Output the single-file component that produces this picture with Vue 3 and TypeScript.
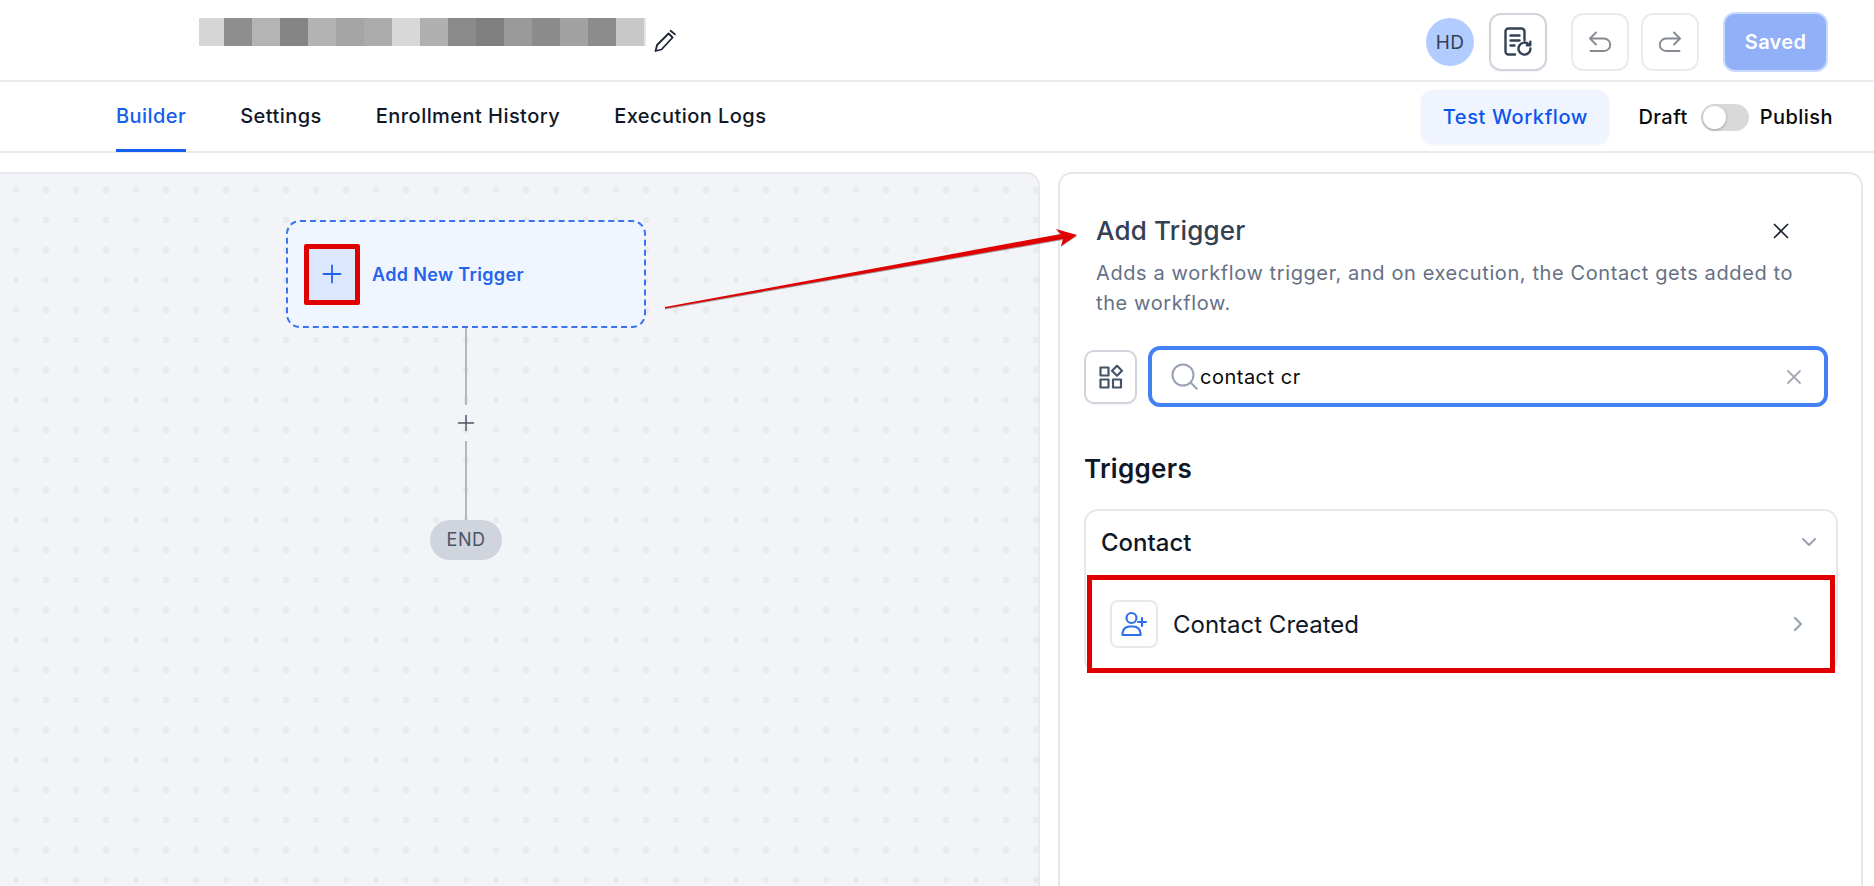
<script setup lang="ts">
const blurBlocks: string[] = [
  '#d6d6d6', '#8e8e8e', '#b4b4b4', '#858585', '#b3b3b3', '#a5a5a5', '#ababab', '#d8d8d8',
  '#b0b0b0', '#8a8a8a', '#808080', '#9a9a9a', '#8b8b8b', '#a2a2a2', '#8c8c8c', '#c8c8c8'
]

const tabs = ['Builder', 'Settings', 'Enrollment History', 'Execution Logs']
</script>

<template>
  <div class="page">
    <header class="topbar">
      <div class="name-row">
        <div class="blur-name">
          <span v-for="(color, i) in blurBlocks" :key="i" class="blur-block" :style="{ background: color }"></span>
        </div>
        <svg class="pencil" width="24" height="24" viewBox="0 0 24 24" fill="none" stroke="#1d2433" stroke-width="1.800" stroke-linejoin="round" stroke-linecap="round">
          <path d="M2.500 22l1.600-6L15.600 4.500l4 4L8.500 20.500z" />
          <path d="M17.600 1.800l4.400 3.600" />
        </svg>
      </div>
      <div class="actions">
        <div class="avatar">HD</div>
        <button class="icon-btn dark">
          <svg width="30" height="30" viewBox="0 0 30 30" fill="none" stroke="#344054" stroke-width="2.400" stroke-linecap="round" stroke-linejoin="round">
            <path d="M12 27.500H5.500a3 3 0 0 1-3-3V4.500a3 3 0 0 1 3-3h13a3 3 0 0 1 3 3V13" />
            <path d="M7.500 8.500h9M7.500 13.500h9M7.500 18.500h4" />
            <path d="M27.500 21.500a6 6 0 1 1-1.800-4.200" />
            <path d="M27.300 14.800v3.400h-3.400" />
          </svg>
        </button>
        <button class="icon-btn undo">
          <svg width="26" height="26" viewBox="0 0 26 26" fill="none" stroke="#858a93" stroke-width="1.900" stroke-linecap="round" stroke-linejoin="round">
            <path d="M9 3.500L3 9.500l6 6" />
            <path d="M3.500 9.500H17a6 6 0 0 1 0 12.500H3.500" />
          </svg>
        </button>
        <button class="icon-btn">
          <svg width="26" height="26" viewBox="0 0 26 26" fill="none" stroke="#858a93" stroke-width="1.900" stroke-linecap="round" stroke-linejoin="round">
            <path d="M17 3.500l6 6-6 6" />
            <path d="M22.500 9.500H9a6 6 0 0 0 0 12.500h13.500" />
          </svg>
        </button>
        <button class="saved">Saved</button>
      </div>
    </header>

    <nav class="tabbar">
      <div class="tabs">
        <div v-for="(tab, i) in tabs" :key="tab" class="tab" :class="{ active: i === 0 }">{{ tab }}</div>
      </div>
      <div class="tab-actions">
        <button class="test-btn">Test Workflow</button>
        <span class="toggle-label draft">Draft</span>
        <span class="toggle"><span class="knob"></span></span>
        <span class="toggle-label">Publish</span>
      </div>
    </nav>

    <main class="workspace">
      <section class="canvas">
        <div class="flow">
          <div class="trigger-node">
            <div class="plus-box">
              <svg width="20" height="20" viewBox="0 0 20 20" fill="none" stroke="#2563eb" stroke-width="1.800" stroke-linecap="round">
                <path d="M10 1.500v17M1.500 10h17" />
              </svg>
            </div>
            <span class="trigger-text">Add New Trigger</span>
          </div>
          <div class="line first"></div>
          <svg class="add-step" width="18" height="18" viewBox="0 0 18 18" fill="none" stroke="#4b5563" stroke-width="1.500" stroke-linecap="round">
            <path d="M9 1.500v15M1.500 9h15" />
          </svg>
          <div class="line second"></div>
          <div class="end-pill">END</div>
        </div>
      </section>

      <aside class="panel">
        <div class="panel-head">
          <h2 class="panel-title">Add Trigger</h2>
          <svg class="close" width="16" height="16" viewBox="0 0 16 16" fill="none" stroke="#1d2433" stroke-width="1.700" stroke-linecap="round">
            <path d="M1.500 1.500l13 13M14.500 1.500l-13 13" />
          </svg>
        </div>
        <p class="panel-desc">Adds a workflow trigger, and on execution, the Contact gets added to the workflow.</p>

        <div class="search-row">
          <button class="filter-btn">
            <svg width="26" height="26" viewBox="0 0 26 26" fill="none" stroke="#475467" stroke-width="2.200" stroke-linejoin="round">
              <rect x="2.500" y="3.500" width="8" height="8" />
              <rect x="2.500" y="15.500" width="8" height="8" />
              <rect x="15" y="15.500" width="8" height="8" />
              <path d="M19 1.800l5 5-5 5-5-5z" />
            </svg>
          </button>
          <div class="search-box">
            <svg width="27" height="27" viewBox="0 0 27 27" fill="none" stroke="#98a2b3" stroke-width="2" stroke-linecap="round">
              <circle cx="12" cy="12" r="10.500" />
              <path d="M19.800 19.800l6 6" />
            </svg>
            <span class="search-text">contact cr</span>
            <svg class="clear" width="16" height="16" viewBox="0 0 16 16" fill="none" stroke="#a3a9b5" stroke-width="1.800" stroke-linecap="round">
              <path d="M2 2l12 12M14 2L2 14" />
            </svg>
          </div>
        </div>

        <h3 class="section-title">Triggers</h3>

        <div class="accordion">
          <div class="accordion-head">
            <span class="accordion-title">Contact</span>
            <svg width="16" height="10" viewBox="0 0 16 10" fill="none" stroke="#98a2b3" stroke-width="2" stroke-linecap="round" stroke-linejoin="round">
              <path d="M2 2l6 6 6-6" />
            </svg>
          </div>
          <div class="trigger-item">
            <div class="item-icon">
              <svg width="28" height="28" viewBox="0 0 28 28" fill="none" stroke="#2f6fed" stroke-width="2.200" stroke-linecap="round" stroke-linejoin="round">
                <circle cx="11.500" cy="8" r="5" />
                <path d="M2.500 25v-1.500a7 7 0 0 1 7-7h4a7 7 0 0 1 7 7V25z" />
                <path d="M22 8v8M18 12h8" />
              </svg>
            </div>
            <span class="item-text">Contact Created</span>
            <svg class="item-chevron" width="10" height="16" viewBox="0 0 10 16" fill="none" stroke="#98a2b3" stroke-width="2.200" stroke-linecap="round" stroke-linejoin="round">
              <path d="M2 2l6 6-6 6" />
            </svg>
          </div>
        </div>
      </aside>
    </main>

    <!-- annotation arrow lies over the canvas and the panel -->
    <svg class="arrow" width="1874" height="886" viewBox="0 0 1874 886">
      <polygon points="665,307 1061,234 1056,229 1077,235 1061,246 1063,239 665,308.500" fill="#e00000" />
    </svg>
  </div>
</template>

<style>
html,
body {
  margin: 0;
  background: #ffffff;
}
</style>

<style scoped>
.page {
  position: relative;
  width: 1874px;
  height: 886px;
  overflow: hidden;
  background: #fff;
  font-family: Inter, "Liberation Sans", sans-serif;
  color: #101828;
}

button {
  font-family: inherit;
  padding: 0;
  background: #fff;
}

.topbar {
  height: 82px;
  box-sizing: border-box;
  display: flex;
  justify-content: space-between;
  padding: 18px 46px 0 199px;
  border-bottom: 2px solid #eaebf0;
}

.name-row {
  display: flex;
  align-items: flex-start;
}

.blur-name {
  display: flex;
  width: 447px;
  height: 28px;
  background: #e6e6e6;
}

.blur-block {
  width: 28px;
  height: 28px;
}

.blur-block:first-child {
  width: 25px;
}

.pencil {
  margin: 11px 0 0 7px;
}

.actions {
  display: flex;
  align-items: center;
  height: 48px;
}

.avatar {
  width: 48px;
  height: 48px;
  border-radius: 50%;
  background: #b2ccff;
  color: #344054;
  font-size: 19px;
  letter-spacing: 0.4px;
  display: grid;
  place-items: center;
}

.icon-btn {
  width: 58px;
  height: 58px;
  box-sizing: border-box;
  border: 2px solid #e9ebf0;
  border-radius: 12px;
  display: grid;
  place-items: center;
  margin-left: 12px;
}

.icon-btn.dark {
  border-color: #d0d5dd;
  margin-left: 15px;
  box-shadow: 0 1px 2px rgba(16, 24, 40, 0.05);
}

.icon-btn.undo {
  margin-left: 24px;
}

.saved {
  width: 105px;
  height: 60px;
  box-sizing: border-box;
  margin-left: 24px;
  border: 2px solid #c9dafc;
  border-radius: 12px;
  background: #91b0f8;
  color: #fff;
  font-size: 20px;
  font-weight: 600;
  letter-spacing: 0.3px;
}

.tabbar {
  height: 71px;
  box-sizing: border-box;
  display: flex;
  justify-content: space-between;
  padding: 0 41px 0 116px;
  border-bottom: 2px solid #eaebf0;
}

.tabs {
  display: flex;
  gap: 54px;
}

.tab {
  height: 70px;
  box-sizing: border-box;
  line-height: 68px;
  font-size: 20px;
  font-weight: 500;
  letter-spacing: 0.45px;
  color: #101828;
}

.tab.active {
  color: #155eef;
  border-bottom: 3px solid #155eef;
}

.tab-actions {
  display: flex;
  align-items: center;
  height: 70px;
}

.test-btn {
  width: 188px;
  height: 54px;
  border: none;
  border-radius: 12px;
  background: #eff4ff;
  color: #0b57ee;
  font-size: 20px;
  font-weight: 500;
  letter-spacing: 0.6px;
  box-shadow: 0 1px 3px rgba(16, 24, 40, 0.06);
}

.toggle-label {
  font-size: 20px;
  font-weight: 500;
  letter-spacing: 0.45px;
  color: #0a0a0a;
}

.toggle-label.draft {
  margin-left: 29px;
}

.toggle {
  width: 48px;
  height: 27px;
  margin: 0 11px 0 13px;
  border-radius: 14px;
  background: #d9d9d9;
  display: block;
  padding: 2px;
  box-sizing: border-box;
}

.knob {
  display: block;
  width: 23px;
  height: 23px;
  border-radius: 50%;
  background: #fff;
  box-shadow: 0 1px 3px rgba(16, 24, 40, 0.3);
}

.workspace {
  display: flex;
  gap: 18px;
  padding-top: 19px;
}

.canvas {
  width: 1040px;
  height: 760px;
  flex: none;
  box-sizing: border-box;
  border: 2px solid #e7e8ee;
  border-left: none;
  border-radius: 0 14px 0 0;
  background-color: #f3f4f8;
  background-image: radial-gradient(circle at center, #e9eaec 0, #e9eaec 3px, transparent 3.5px);
  background-size: 30px 30px;
  background-position: 1px 1px;
}

.flow {
  width: 360px;
  margin: 46px 0 0 286px;
  display: flex;
  flex-direction: column;
  align-items: center;
}

.trigger-node {
  width: 100%;
  height: 108px;
  box-sizing: border-box;
  border: 2px dashed #3b72f0;
  border-radius: 14px;
  background: #eff6ff;
  display: flex;
  align-items: center;
  gap: 12px;
  padding-left: 16px;
}

.plus-box {
  width: 56px;
  height: 61px;
  box-sizing: border-box;
  border: 5px solid #e00000;
  border-radius: 2px;
  background: #dbe8fe;
  display: grid;
  place-items: center;
}

.trigger-text {
  font-size: 18px;
  font-weight: 600;
  color: #2563eb;
  letter-spacing: 0.35px;
}

.line {
  width: 2px;
  background: #b4b6ba;
}

.line.first {
  height: 77px;
}

.add-step {
  margin: 9px 0;
}

.line.second {
  height: 79px;
}

.end-pill {
  width: 72px;
  height: 40px;
  border-radius: 20px;
  background: #d0d5dd;
  color: #475467;
  font-size: 18px;
  line-height: 40px;
  text-align: center;
  letter-spacing: 0.5px;
}

.panel {
  width: 805px;
  height: 760px;
  flex: none;
  box-sizing: border-box;
  border: 2px solid #e7e8ee;
  border-bottom: none;
  border-radius: 14px 14px 0 0;
  padding: 0 24px 0 25px;
}

.panel-head {
  display: flex;
  justify-content: space-between;
  align-items: center;
  margin: 39px 48px 0 11px;
}

.panel-title {
  margin: 0;
  font-size: 26px;
  font-weight: 500;
  letter-spacing: 0.2px;
  line-height: 36px;
  color: #344054;
}

.panel-desc {
  margin: 9px 40px 0 11px;
  font-size: 20px;
  letter-spacing: 0.6px;
  line-height: 30px;
  color: #667085;
}

.search-row {
  display: flex;
  align-items: center;
  gap: 11px;
  margin: 28px 0 0 -1px;
}

.filter-btn {
  width: 53px;
  height: 54px;
  box-sizing: border-box;
  border: 2px solid #d0d5dd;
  border-radius: 10px;
  display: grid;
  place-items: center;
  box-shadow: 0 1px 2px rgba(16, 24, 40, 0.05);
}

.search-box {
  width: 680px;
  height: 61px;
  box-sizing: border-box;
  border: 4px solid #4381f4;
  border-radius: 12px;
  display: flex;
  align-items: center;
  padding: 0 22px 0 19px;
  gap: 2px;
}

.search-text {
  flex: 1;
  font-size: 20px;
  letter-spacing: 0.5px;
  color: #0a0a0a;
}

.section-title {
  margin: 44px 0 0 -1px;
  font-size: 26px;
  font-weight: 600;
  letter-spacing: 0.3px;
  line-height: 36px;
  color: #101828;
}

.accordion {
  margin-top: 22px;
  width: 754px;
  margin-left: -1px;
  box-sizing: border-box;
  border: 2px solid #e7e8ee;
  border-radius: 14px;
  height: 164px;
}

.accordion-head {
  height: 64px;
  box-sizing: border-box;
  display: flex;
  align-items: center;
  justify-content: space-between;
  padding: 0 19px 2px 15px;
}

.accordion-title {
  font-size: 24px;
  font-weight: 500;
  color: #101828;
}

.trigger-item {
  height: 98px;
  box-sizing: border-box;
  margin: 0 1px;
  border: 5px solid #e00000;
  display: flex;
  align-items: center;
  padding: 0 27px 0 18px;
  background: #fff;
  position: relative;
}

.item-icon {
  width: 48px;
  height: 48px;
  box-sizing: border-box;
  border: 2px solid #e7e8ee;
  border-radius: 8px;
  display: grid;
  place-items: center;
  flex: none;
}

.item-text {
  flex: 1;
  margin-left: 15px;
  font-size: 24px;
  color: #101828;
}

.arrow {
  position: absolute;
  left: 0;
  top: 0;
  pointer-events: none;
  filter: drop-shadow(0 1px 0.5px rgba(0, 0, 0, 0.35));
}
</style>
